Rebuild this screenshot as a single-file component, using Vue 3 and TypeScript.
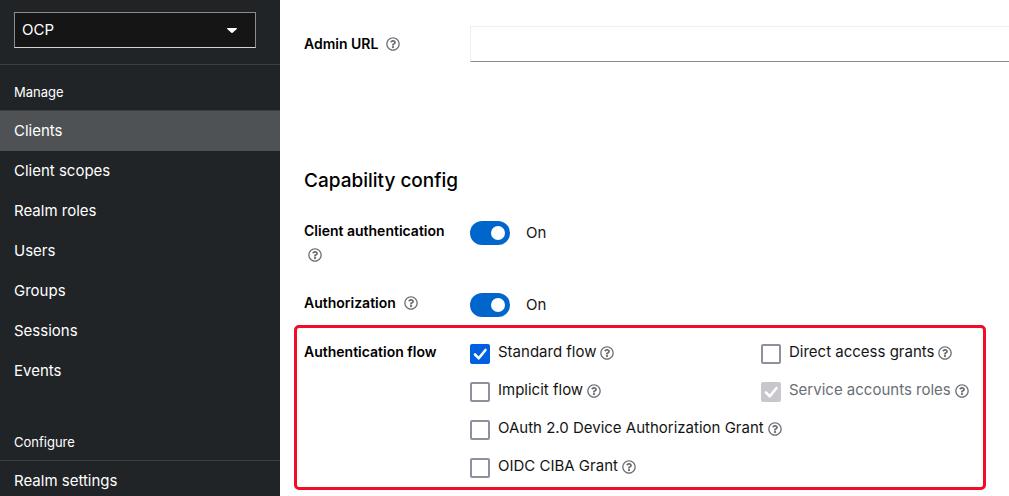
<script setup lang="ts">
import { defineComponent, h, ref } from 'vue'

interface NavGroup {
  title: string
  items: string[]
}

interface FlowOption {
  id: string
  label: string
  checked: boolean
  disabled?: boolean
  wide?: boolean
}

const realm = ref('OCP')
const current = ref('Clients')
const adminUrl = ref('')
const clientAuthentication = ref(true)
const authorization = ref(true)

const groups: NavGroup[] = [
  {
    title: 'Manage',
    items: ['Clients', 'Client scopes', 'Realm roles', 'Users', 'Groups', 'Sessions', 'Events'],
  },
  { title: 'Configure', items: ['Realm settings'] },
]

const flows = ref<FlowOption[]>([
  { id: 'standard', label: 'Standard flow', checked: true },
  { id: 'direct', label: 'Direct access grants', checked: false },
  { id: 'implicit', label: 'Implicit flow', checked: false },
  { id: 'service', label: 'Service accounts roles', checked: true, disabled: true },
  { id: 'device', label: 'OAuth 2.0 Device Authorization Grant', checked: false, wide: true },
  { id: 'ciba', label: 'OIDC CIBA Grant', checked: false, wide: true },
])

const helpPath =
  'M256 8C119.043 8 8 119.083 8 256c0 136.997 111.043 248 248 248s248-111.003 248-248C504 119.083 392.957 8 256 8zm0 448c-110.532 0-200-89.431-200-200 0-110.495 89.472-200 200-200 110.491 0 200 89.471 200 200 0 110.53-89.431 200-200 200zm107.244-255.2c0 67.052-72.421 68.084-72.421 92.863V300c0 6.627-5.373 12-12 12h-45.647c-6.627 0-12-5.373-12-12v-8.659c0-35.745 27.1-50.034 47.579-61.516 17.561-9.845 28.324-16.541 28.324-29.579 0-17.246-21.999-28.693-39.784-28.693-23.189 0-33.894 10.977-48.942 29.969-4.057 5.12-11.46 6.071-16.666 2.124l-27.824-21.098c-5.107-3.872-6.251-11.066-2.644-16.363C184.846 131.491 214.94 112 261.794 112c49.071 0 101.45 38.304 101.45 88.8zM298 368c0 23.159-18.841 42-42 42s-42-18.841-42-42 18.841-42 42-42 42 18.841 42 42z'

const HelpIcon = defineComponent({
  render: () =>
    h('svg', { viewBox: '0 0 512 512', width: 14, height: 14, fill: 'currentColor', 'aria-hidden': 'true' }, [
      h('path', { d: helpPath }),
    ]),
})
</script>

<template>
  <div class="page">
    <aside class="sidebar">
      <div class="realm">
        <div class="realm-box">
          <select v-model="realm" class="realm-select" aria-label="Realm">
            <option value="OCP">OCP</option>
          </select>
          <svg class="caret" viewBox="0 0 10 5" width="10" height="5" aria-hidden="true">
            <path d="M0.6 0h8.8c.6 0 .8.6.4 1L5.6 4.8c-.3.3-.9.3-1.2 0L.2 1C-.2.6 0 0 .6 0z" fill="#fff" />
          </svg>
        </div>
      </div>
      <nav v-for="group in groups" :key="group.title" class="group" :aria-label="group.title">
        <h2 class="group-title">{{ group.title }}</h2>
        <a
          v-for="item in group.items"
          :key="item"
          href="#"
          class="nav-link"
          :class="{ active: item === current }"
          @click.prevent="current = item"
          >{{ item }}</a
        >
      </nav>
    </aside>

    <main class="content">
      <div class="row admin">
        <div class="label-cell">
          <label for="admin-url">Admin URL</label>
          <button type="button" class="help" aria-label="Help for Admin URL"><HelpIcon /></button>
        </div>
        <input id="admin-url" v-model="adminUrl" class="text-input" type="text" />
      </div>

      <h1 class="heading">Capability config</h1>

      <div class="row">
        <div class="label-cell">
          <label for="client-auth">Client authentication</label>
          <button type="button" class="help" aria-label="Help for Client authentication"><HelpIcon /></button>
        </div>
        <div class="switch">
          <input id="client-auth" v-model="clientAuthentication" type="checkbox" role="switch" class="toggle" />
          <label for="client-auth">{{ clientAuthentication ? 'On' : 'Off' }}</label>
        </div>
      </div>

      <div class="row">
        <div class="label-cell">
          <label for="authorization">Authorization</label>
          <button type="button" class="help" aria-label="Help for Authorization"><HelpIcon /></button>
        </div>
        <div class="switch">
          <input id="authorization" v-model="authorization" type="checkbox" role="switch" class="toggle" />
          <label for="authorization">{{ authorization ? 'On' : 'Off' }}</label>
        </div>
      </div>

      <section class="row flow" role="group" aria-labelledby="flow-label">
        <div id="flow-label" class="label-cell">Authentication flow</div>
        <div class="options">
          <div v-for="flow in flows" :key="flow.id" class="option" :class="{ wide: flow.wide, disabled: flow.disabled }">
            <input :id="flow.id" v-model="flow.checked" class="check" type="checkbox" :disabled="flow.disabled" />
            <label :for="flow.id">{{ flow.label }}</label>
            <button type="button" class="help" :aria-label="`Help for ${flow.label}`"><HelpIcon /></button>
          </div>
        </div>
      </section>
    </main>
  </div>
</template>

<style>
body {
  margin: 0;
}
</style>

<style scoped>
* {
  box-sizing: border-box;
}

.page {
  display: flex;
  height: 100vh;
  overflow: hidden;
  background: #fff;
  color: #151515;
  font-family: Inter, 'Open Sans', sans-serif;
  font-size: 15px;
  line-height: 24px;
}

.sidebar {
  flex: 0 0 280px;
  overflow: hidden;
  background: #212427;
  color: #fff;
}

.realm {
  padding: 12px 24px 16px 14px;
  border-bottom: 1px solid #3c3f42;
}

.realm-box {
  display: grid;
  align-items: center;
}

.realm-select,
.caret {
  grid-area: 1 / 1;
}

.realm-select {
  width: 100%;
  height: 36px;
  padding: 0 32px 0 7px;
  appearance: none;
  border: 1px solid #8a8d90;
  border-bottom-color: #d2d2d2;
  border-radius: 0;
  background: #151515;
  color: #fff;
  font: inherit;
}

.caret {
  justify-self: end;
  margin-right: 19px;
  pointer-events: none;
}

.group-title {
  margin: 0;
  padding: 15px 14px 6px;
  border-bottom: 1px solid #3c3f42;
  font-size: 13px;
  font-weight: 400;
}

.group + .group .group-title {
  padding-top: 39px;
}

.nav-link {
  display: block;
  padding: 8px 14px;
  color: #fff;
  text-decoration: none;
}

.nav-link.active {
  background: #4f5255;
}

.content {
  flex: 1;
  min-width: 0;
  padding-top: 26px;
  padding-left: 24px;
}

.row {
  display: grid;
  grid-template-columns: 166px minmax(0, 1fr);
  align-items: start;
  margin-bottom: 24px;
}

.admin {
  align-items: center;
  margin-bottom: 105px;
}

.label-cell {
  padding-right: 16px;
  color: #000;
  font-size: 14px;
  font-weight: 600;
}

.label-cell label {
  padding-right: 4px;
}

.help {
  display: inline-flex;
  margin-left: 4px;
  padding: 0;
  border: 0;
  background: none;
  color: #6a6e73;
  vertical-align: -2px;
  cursor: pointer;
}

.text-input {
  width: 100%;
  height: 36px;
  padding: 0 8px;
  border: 1px solid #f0f0f0;
  border-right: 0;
  border-bottom-color: #8a8d90;
  border-radius: 0;
  background: #fff;
  font: inherit;
}

.heading {
  margin: 0 0 24px;
  color: #000;
  font-size: 19px;
  font-weight: 500;
  line-height: 28px;
}

.switch {
  display: flex;
  align-items: center;
  gap: 16px;
  padding-top: 2px;
}

.toggle {
  width: 40px;
  height: 24px;
  margin: 0;
  padding: 5px;
  appearance: none;
  border-radius: 12px;
  background: #8a8d90;
}

.toggle::before {
  content: '';
  display: block;
  width: 14px;
  height: 14px;
  border-radius: 7px;
  background: #fff;
}

.toggle:checked {
  background: #06c;
}

.toggle:checked::before {
  margin-left: 16px;
}

.flow {
  margin: -16px 23px 0 -10px;
  padding: 12px 0 9px 7px;
  border: 3px solid #f20c2b;
  border-radius: 5px;
}

.options {
  display: grid;
  grid-template-columns: 291px minmax(0, 1fr);
  row-gap: 14px;
}

.option {
  display: flex;
  align-items: center;
  white-space: nowrap;
}

.option.wide {
  grid-column: 1 / -1;
}

.option.disabled label {
  color: #6a6e73;
}

.option .help {
  padding-top: 2px;
}

.check {
  width: 20px;
  height: 20px;
  margin: 4px 8px 0 0;
  appearance: none;
  border: 2px solid #8f8f9d;
  border-radius: 2px;
  background: #fff center / 20px 20px no-repeat;
}

.check:checked {
  border-color: #0060df;
  background-color: #0060df;
  background-image: url("data:image/svg+xml,%3Csvg xmlns='http://www.w3.org/2000/svg' viewBox='0 0 20 20'%3E%3Cpath d='M5 10.5L8.8 14.3L15.5 6' fill='none' stroke='%23fff' stroke-width='2.6' stroke-linecap='round' stroke-linejoin='round'/%3E%3C/svg%3E");
}

.check:disabled {
  border-color: #c7c7cd;
  background-color: #c7c7cd;
}
</style>
